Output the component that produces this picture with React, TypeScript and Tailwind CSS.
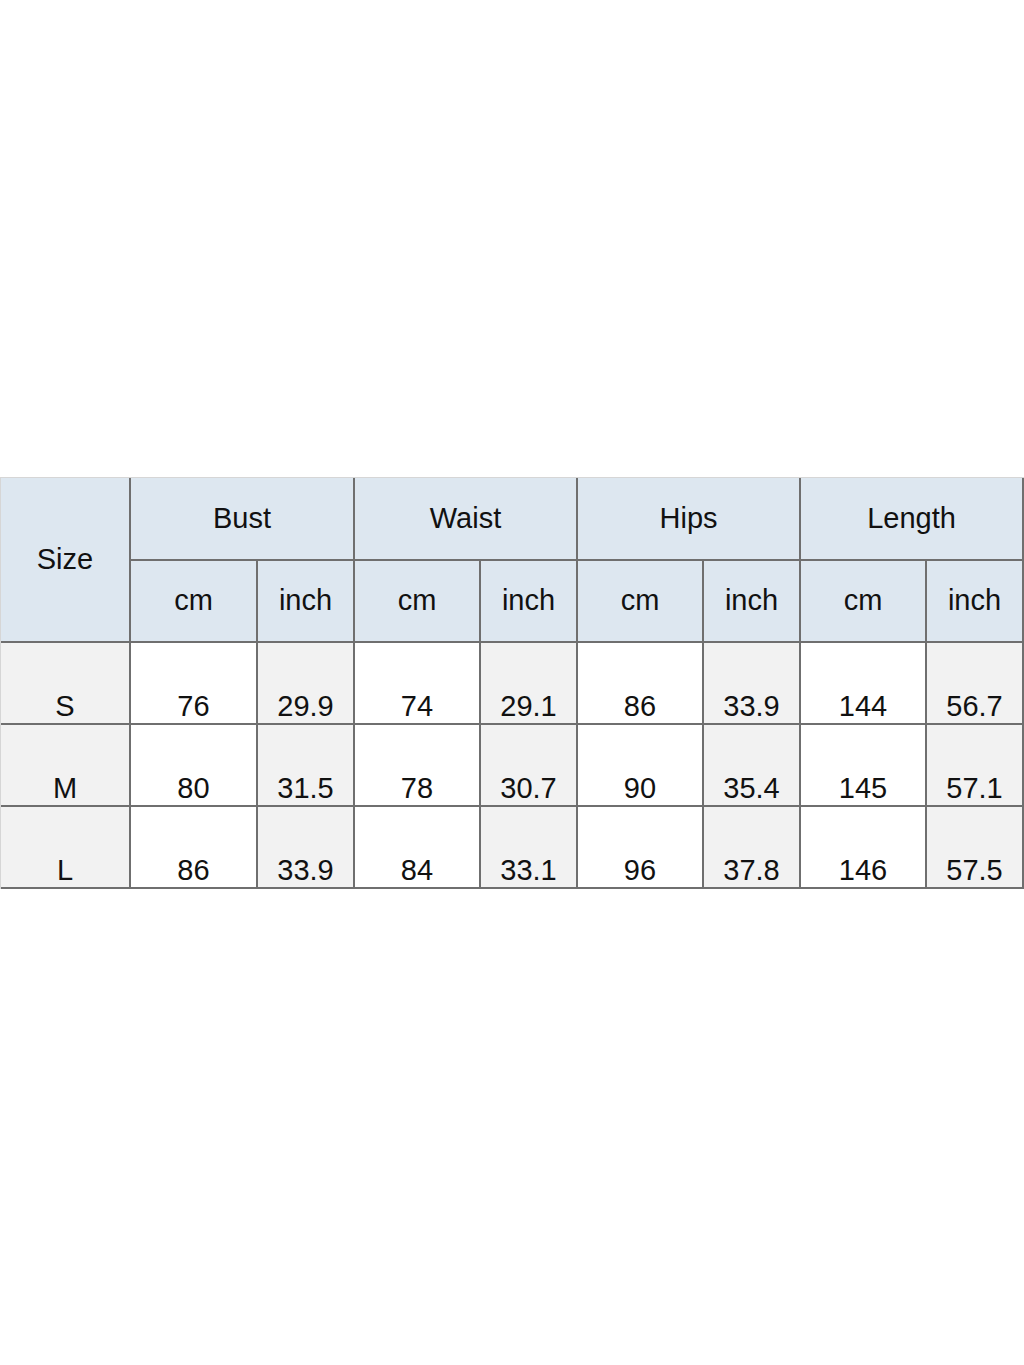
import React from 'react'

const groups = ['Bust', 'Waist', 'Hips', 'Length']

const rows = [
	['S', '76', '29.9', '74', '29.1', '86', '33.9', '144', '56.7'],
	['M', '80', '31.5', '78', '30.7', '90', '35.4', '145', '57.1'],
	['L', '86', '33.9', '84', '33.1', '96', '37.8', '146', '57.5'],
]

const widths = [130, 127, 97, 126, 97, 126, 97, 126, 97]

const line = 'border-r-2 border-b-2 border-[#6f6f6f]'

export default function App() {
	return (
		<div
			className="w-[1024px] h-[1365px] bg-white flex items-center text-[#111]"
			style={{ fontFamily: '"Liberation Sans", Arial, sans-serif' }}
		>
			<table className="table-fixed border-separate border-spacing-0 w-[1024px] border-t border-l border-[#d6d6d6] text-[29px] leading-[33px] text-center">
				<colgroup>
					{widths.map((w, i) => (
						<col key={i} style={{ width: w }} />
					))}
				</colgroup>
				<thead>
					<tr className="h-[83px]">
						<th rowSpan={2} className={`${line} bg-[#dde7f0] font-normal`}>
							Size
						</th>
						{groups.map((g) => (
							<th key={g} colSpan={2} className={`${line} bg-[#dde7f0] font-normal`}>
								{g}
							</th>
						))}
					</tr>
					<tr className="h-[82px]">
						{groups.map((g) => (
							<React.Fragment key={g}>
								<th className={`${line} bg-[#dde7f0] font-normal`}>cm</th>
								<th className={`${line} bg-[#dde7f0] font-normal`}>inch</th>
							</React.Fragment>
						))}
					</tr>
				</thead>
				<tbody>
					{rows.map((r) => (
						<tr key={r[0]} className="h-[82px]">
							{r.map((v, i) => (
								<td
									key={i}
									className={`${line} align-bottom pb-0 ${
										i === 0 || i % 2 === 0 ? 'bg-[#f2f2f2]' : 'bg-white'
									}`}
								>
									{v}
								</td>
							))}
						</tr>
					))}
				</tbody>
			</table>
		</div>
	)
}
